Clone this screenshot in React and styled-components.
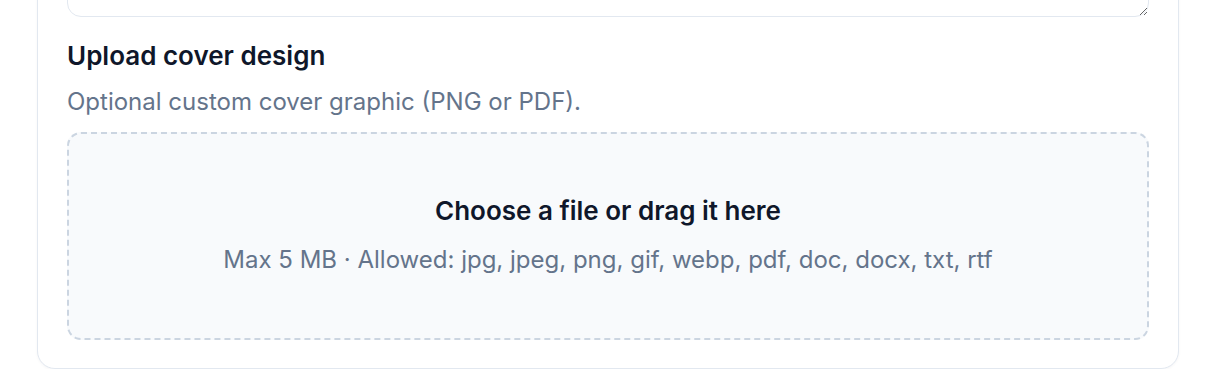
import styled, { createGlobalStyle } from "styled-components";

const GlobalStyle = createGlobalStyle`
  html, body {
    margin: 0;
    padding: 0;
    background: #ffffff;
    font-family: Inter, "Noto Sans", "Liberation Sans", sans-serif;
    overflow: hidden;
  }
`;

// 카드 (위쪽은 스크롤되어 잘린 상태)
const Card = styled.section`
  margin: -80px 37px 0;
  padding: 30px 29px 28px;
  border: 1.5px solid #e2e8f0;
  border-radius: 18px;
  background: #fff;
  box-shadow: 0 1px 3px rgba(15, 23, 42, 0.04);
  display: flex;
  flex-direction: column;
`;

const TextArea = styled.textarea`
  box-sizing: border-box;
  width: 100%;
  height: 66px;
  border: 1.5px solid #e2e8f0;
  border-radius: 14px;
  background: #fff;
  font-family: inherit;
  font-size: 21px;
  resize: vertical;
  outline: none;
`;

const Label = styled.h3`
  margin: 20px 0 0;
  font-size: 26px;
  line-height: 38px;
  font-weight: 600;
  color: #0f172a;
`;

const Hint = styled.p`
  margin: 11px 0 0;
  font-size: 24px;
  line-height: 32px;
  color: #64748b;
`;

const DropZone = styled.label`
  box-sizing: border-box;
  margin-top: 14px;
  height: 208px;
  border: 2px dashed #cbd5e1;
  border-radius: 14px;
  background: #f8fafc;
  display: flex;
  flex-direction: column;
  align-items: center;
  justify-content: center;
  gap: 15px;
  cursor: pointer;
  padding-bottom: 4px;
`;

const DropTitle = styled.span`
  font-size: 26px;
  line-height: 36px;
  font-weight: 600;
  color: #0f172a;
`;

const DropMeta = styled.span`
  font-size: 24px;
  line-height: 32px;
  color: #64748b;
`;

function App() {
  return (
    <>
      <GlobalStyle />
      <Card>
        <TextArea />
        <Label>Upload cover design</Label>
        <Hint>Optional custom cover graphic (PNG or PDF).</Hint>
        <DropZone>
          <DropTitle>Choose a file or drag it here</DropTitle>
          <DropMeta>
            Max 5 MB · Allowed: jpg, jpeg, png, gif, webp, pdf, doc, docx, txt, rtf
          </DropMeta>
        </DropZone>
      </Card>
    </>
  );
}

export default App;
